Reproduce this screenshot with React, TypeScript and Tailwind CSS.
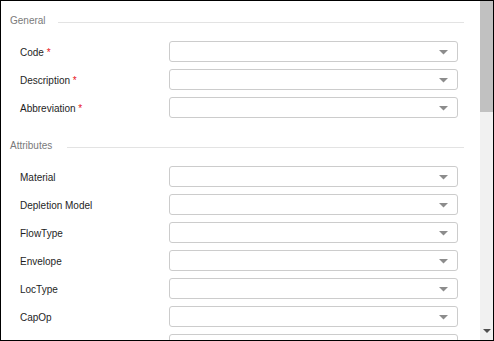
import React from "react";

type Field = { label: string; required?: boolean };

const general: Field[] = [
  { label: "Code", required: true },
  { label: "Description", required: true },
  { label: "Abbreviation", required: true },
];

const attributes: Field[] = [
  { label: "Material" },
  { label: "Depletion Model" },
  { label: "FlowType" },
  { label: "Envelope" },
  { label: "LocType" },
  { label: "CapOp" },
  { label: "" },
];

function Row({ f }: { f: Field }) {
  return (
    <div className="flex items-center h-[21px] shrink-0">
      <div className="w-[168px] pl-[19px] pt-[3px] text-[10px] leading-[14px] text-[#1e1e1e]">
        {f.label}
        {f.required && <span className="text-[#e8141e]"> *</span>}
      </div>
      <div className="relative w-[289px] h-[21px] border border-[#cccccc] rounded-[3px] bg-white">
        <svg
          className="absolute right-[9px] top-[8px]"
          width="9"
          height="5"
          viewBox="0 0 9 5"
        >
          <path d="M0 0 H9 L4.5 4.5 Z" fill="#8c8c8c" />
        </svg>
      </div>
    </div>
  );
}

function Header({ title, w, mt }: { title: string; w: string; mt: string }) {
  return (
    <div className={`flex items-end h-[14px] pl-[9px] pr-[16px] shrink-0 ${mt}`}>
      <div className={`${w} relative top-[1px] text-[10px] leading-[14px] text-[#7a7a7a]`}>{title}</div>
      <div className="flex-1 h-px bg-[#e3e3e3] mb-[4px]" />
    </div>
  );
}

export default function App() {
  return (
    <div
      className="w-[494px] h-[341px] border border-black bg-white flex overflow-hidden"
      style={{ fontFamily: '"Liberation Sans", Arial, sans-serif' }}
    >
      <div className="flex-1 flex flex-col overflow-hidden">
        <Header title="General" w="w-[48px]" mt="mt-[12px]" />
        <div className="flex flex-col gap-[7px] mt-[14px]">
          {general.map((f) => (
            <Row key={f.label} f={f} />
          ))}
        </div>
        <Header title="Attributes" w="w-[57px]" mt="mt-[20px]" />
        <div className="flex flex-col gap-[7px] mt-[14px]">
          {attributes.map((f, i) => (
            <Row key={i} f={f} />
          ))}
        </div>
      </div>
      <div className="w-[13px] shrink-0 bg-[#f1f1f1] flex flex-col justify-between">
        <div className="h-[111px] bg-[#c1c1c1]" />
        <div className="h-[14px] flex items-start justify-center pt-[3px]">
          <svg width="8" height="4" viewBox="0 0 8 4">
            <path d="M0 0 H8 L4 4 Z" fill="#505050" />
          </svg>
        </div>
      </div>
    </div>
  );
}
